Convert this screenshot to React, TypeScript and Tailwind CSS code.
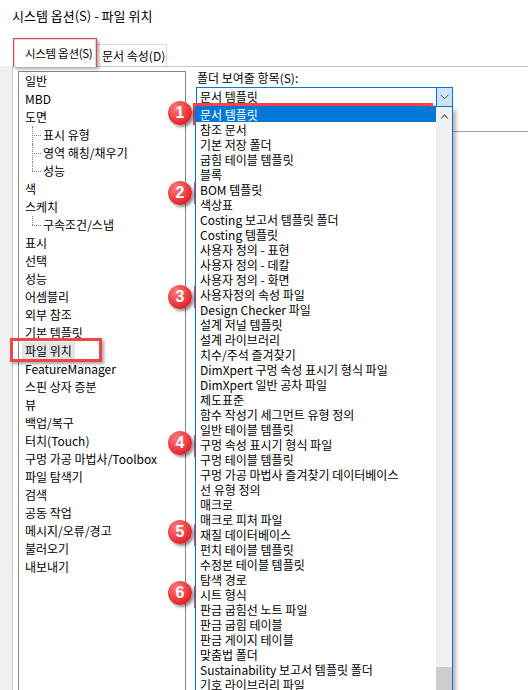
import React from "react";

type TreeItem = { t: string; child?: boolean; last?: boolean; sel?: boolean };

const TREE: TreeItem[] = [
  { t: "일반" },
  { t: "MBD" },
  { t: "도면" },
  { t: "표시 유형", child: true },
  { t: "영역 해칭/채우기", child: true },
  { t: "성능", child: true, last: true },
  { t: "색" },
  { t: "스케치" },
  { t: "구속조건/스냅", child: true, last: true },
  { t: "표시" },
  { t: "선택" },
  { t: "성능" },
  { t: "어셈블리" },
  { t: "외부 참조" },
  { t: "기본 템플릿" },
  { t: "파일 위치", sel: true },
  { t: "FeatureManager" },
  { t: "스핀 상자 증분" },
  { t: "뷰" },
  { t: "백업/복구" },
  { t: "터치(Touch)" },
  { t: "구멍 가공 마법사/Toolbox" },
  { t: "파일 탐색기" },
  { t: "검색" },
  { t: "공동 작업" },
  { t: "메시지/오류/경고" },
  { t: "불러오기" },
  { t: "내보내기" },
];

const FOLDERS = [
  "문서 템플릿",
  "참조 문서",
  "기본 저장 폴더",
  "굽힘 테이블 템플릿",
  "블록",
  "BOM 템플릿",
  "색상표",
  "Costing 보고서 템플릿 폴더",
  "Costing 템플릿",
  "사용자 정의 - 표현",
  "사용자 정의 - 데칼",
  "사용자 정의 - 화면",
  "사용자정의 속성 파일",
  "Design Checker 파일",
  "설계 저널 템플릿",
  "설계 라이브러리",
  "치수/주석 즐겨찾기",
  "DimXpert 구멍 속성 표시기 형식 파일",
  "DimXpert 일반 공차 파일",
  "제도표준",
  "함수 작성기 세그먼트 유형 정의",
  "일반 테이블 템플릿",
  "구멍 속성 표시기 형식 파일",
  "구멍 테이블 템플릿",
  "구멍 가공 마법사 즐겨찾기 데이터베이스",
  "선 유형 정의",
  "매크로",
  "매크로 피처 파일",
  "재질 데이터베이스",
  "펀치 테이블 템플릿",
  "수정본 테이블 템플릿",
  "탐색 경로",
  "시트 형식",
  "판금 굽힘선 노트 파일",
  "판금 굽힘 테이블",
  "판금 게이지 테이블",
  "맞춤법 폴더",
  "Sustainability 보고서 템플릿 폴더",
  "기호 라이브러리 파일",
];

// 강조 표시 (스크린샷 위 주석)
const MARKS = [
  "left-[13px] top-[38px] w-[84px] h-[29px]",
  "left-[10px] top-[338px] w-[92px] h-[24px]",
  "left-[193px] top-[103px] w-[240px] h-[22px]",
  "left-[194px] top-[182px] w-[243px] h-[22px]",
  "left-[194px] top-[286px] w-[243px] h-[22px]",
  "left-[194px] top-[435px] w-[243px] h-[22px]",
  "left-[194px] top-[524px] w-[243px] h-[22px]",
  "left-[194px] top-[586px] w-[245px] h-[22px]",
];

const BADGES = [
  { n: 1, cls: "top-[101px]" },
  { n: 2, cls: "top-[181px]" },
  { n: 3, cls: "top-[285px]" },
  { n: 4, cls: "top-[431px]" },
  { n: 5, cls: "top-[520px]" },
  { n: 6, cls: "top-[581px]" },
];

const TreeRow = ({ item }: { item: TreeItem }) => {
  if (item.child) {
    return (
      <div className="relative h-[18px] pl-[24px] leading-[18px] whitespace-nowrap">
        <span
          className={
            "absolute left-[13px] top-0 border-l border-dotted border-[#808080] " +
            (item.last ? "h-[9px]" : "h-[18px]")
          }
        />
        <span className="absolute left-[13px] top-[9px] w-[9px] border-t border-dotted border-[#808080]" />
        {item.t}
      </div>
    );
  }
  return (
    <div className="h-[18px] pl-[6px] leading-[18px] whitespace-nowrap">
      {item.sel ? <span className="-ml-[3px] px-[3px] bg-[#e5e5e5] inline-block">{item.t}</span> : item.t}
    </div>
  );
};

export default function App() {
  return (
    <div className="relative w-[528px] h-[690px] overflow-hidden bg-white text-[12px] text-black font-['Noto_Sans_CJK_KR','Noto_Sans',sans-serif]">
      {/* 제목 */}
      <div className="h-[36px] pl-[12px] pt-[7px] text-[13px] leading-[18px]">시스템 옵션(S) - 파일 위치</div>

      {/* 탭 */}
      <div className="h-[30px] flex items-end pl-[14px]">
        <div className="relative z-10 -mb-px h-[28px] w-[82px] bg-white border-t border-l border-r border-[#d9d9d9] pl-[10px] pt-[4px] leading-[18px] text-[11.5px] whitespace-nowrap tracking-[-0.3px]">
          시스템 옵션(S)
        </div>
        <div className="h-[22px] w-[71px] border-t border-r border-[#d9d9d9] bg-white pl-[6px] pt-[2px] leading-[18px] whitespace-nowrap">
          문서 속성(D)
        </div>
      </div>

      <div className="flex h-[624px]">
        <div className="w-[12px] bg-[#f0f0f0]" />
        <div className="flex-1 flex bg-white border-l border-t border-[#c8c8c8]">
          {/* 트리 */}
          <div className="ml-[5px] mt-[4px] w-[168px] h-[640px] border border-[#828790]">
            {TREE.map((it, i) => (
              <TreeRow key={i} item={it} />
            ))}
          </div>

          {/* 오른쪽 */}
          <div className="ml-[9px] flex-1 flex flex-col">
            <div className="ml-[2px] mt-[2px] h-[18px] leading-[18px]">폴더 보여줄 항목(S):</div>
            <div className="ml-[1px] w-[257px] h-[20px] border border-[#0078d7] flex">
              <div className="flex-1 pl-[3px] leading-[18px]">문서 템플릿</div>
              <div className="w-[16px] bg-[#cce4f7] border-l border-[#0078d7] flex items-center justify-center">
                <svg width="9" height="6" viewBox="0 0 9 6">
                  <polyline points="0.5,0.8 4.5,4.8 8.5,0.8" fill="none" stroke="#505050" strokeWidth="1" />
                </svg>
              </div>
            </div>
            <div className="flex flex-1">
              <div className="relative z-10 w-[258px] h-[590px] border-l border-r border-[#0078d7] bg-white flex shadow-[3px_3px_4px_rgba(0,0,0,0.3)]">
                <div className="w-[240px] overflow-hidden">
                  {FOLDERS.map((f, i) => (
                    <div
                      key={f}
                      className={
                        "h-[15px] pl-[4px] leading-[15px] whitespace-nowrap " +
                        (i === 0 ? "bg-[#0078d7] text-white" : "")
                      }
                    >
                      {f}
                    </div>
                  ))}
                </div>
                <div className="w-[16px] bg-[#f0f0f0] flex flex-col">
                  <div className="h-[17px] flex items-center justify-center">
                    <svg width="9" height="6" viewBox="0 0 9 6">
                      <path d="M0.5 5.5 L4.5 1 L8.5 5.5 L7 5.5 L4.5 2.8 L2 5.5 Z" fill="#606060" />
                    </svg>
                  </div>
                  <div className="mt-[543px] h-[30px] bg-[#cdcdcd]" />
                </div>
              </div>
              <div className="flex-1 mt-[24px] border-t border-[#a0a0a0]" />
            </div>
          </div>
        </div>
      </div>

      {MARKS.map((m, i) => (
        <div
          key={i}
          className={"absolute border-[3px] border-[#f2454b] shadow-[2px_2px_3px_rgba(0,0,0,0.35)] " + m}
        />
      ))}
      {BADGES.map((b) => (
        <div
          key={b.n}
          className={
            "absolute left-[168px] w-[24px] h-[24px] rounded-full flex items-center justify-center text-white text-[16px] font-bold leading-none bg-[radial-gradient(circle_at_35%_30%,#ff7a7a,#e3262d_70%)] shadow-[2px_2px_3px_rgba(0,0,0,0.45)] font-['Liberation_Sans',sans-serif] " +
            b.cls
          }
        >
          {b.n}
        </div>
      ))}
    </div>
  );
}
